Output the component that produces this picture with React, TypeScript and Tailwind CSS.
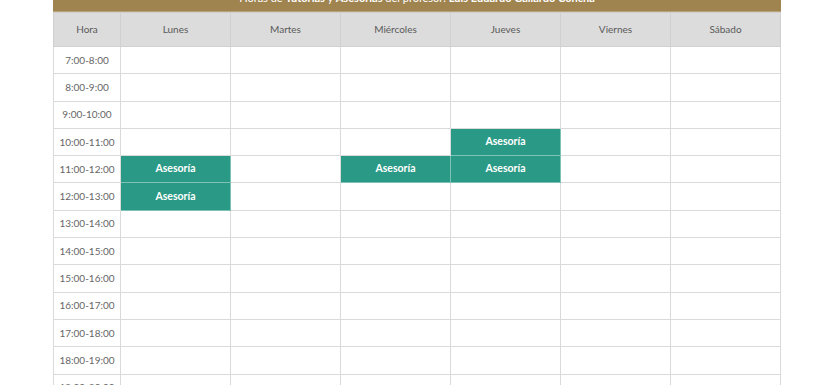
const days = ["Lunes", "Martes", "Miércoles", "Jueves", "Viernes", "Sábado"];

const hours = [
  "7:00-8:00",
  "8:00-9:00",
  "9:00-10:00",
  "10:00-11:00",
  "11:00-12:00",
  "12:00-13:00",
  "13:00-14:00",
  "14:00-15:00",
  "15:00-16:00",
  "16:00-17:00",
  "17:00-18:00",
  "18:00-19:00",
  "19:00-20:00",
];

// hora -> dias con asesoría
const busy: Record<string, string[]> = {
  "10:00-11:00": ["Jueves"],
  "11:00-12:00": ["Lunes", "Miércoles", "Jueves"],
  "12:00-13:00": ["Lunes"],
};

export default function App() {
  return (
    <div className="w-[840px] h-[385px] overflow-hidden bg-white font-['Lato','Noto_Sans',sans-serif]">
      <div className="ml-[53px] w-[728px]">
        <div className="h-[12px] overflow-hidden bg-[#9f8450] border-b border-[#b8a27a]">
          <p className="mt-[-9px] text-center text-[11px] leading-[14px] text-white">
            Horas de <b>Tutorías</b> y <b>Asesorías</b> del profesor: <b>Luis Eduardo Gallardo Concha</b>
          </p>
        </div>
        <table className="w-[728px] table-fixed border-collapse text-[10px] text-[#5a5a5a]">
          <colgroup>
            <col className="w-[67px]" />
            {days.map((d) => (
              <col key={d} className="w-[110px]" />
            ))}
          </colgroup>
          <thead>
            <tr className="h-[34px] bg-[#dcdcdc]">
              <th className="font-normal border border-[#d0d0d0]">Hora</th>
              {days.map((d) => (
                <th key={d} className="font-normal border border-[#d0d0d0]">
                  {d}
                </th>
              ))}
            </tr>
          </thead>
          <tbody>
            {hours.map((h) => (
              <tr key={h} className="h-[27.3px]">
                <td className="text-center border border-[#dadada] text-[#666]">{h}</td>
                {days.map((d) =>
                  busy[h]?.includes(d) ? (
                    <td
                      key={d}
                      className="text-center border border-[#7cc3b6] bg-[#2a9a86] text-white font-bold text-[10.5px]"
                    >
                      Asesoría
                    </td>
                  ) : (
                    <td key={d} className="border border-[#dadada]" />
                  )
                )}
              </tr>
            ))}
          </tbody>
        </table>
      </div>
    </div>
  );
}
